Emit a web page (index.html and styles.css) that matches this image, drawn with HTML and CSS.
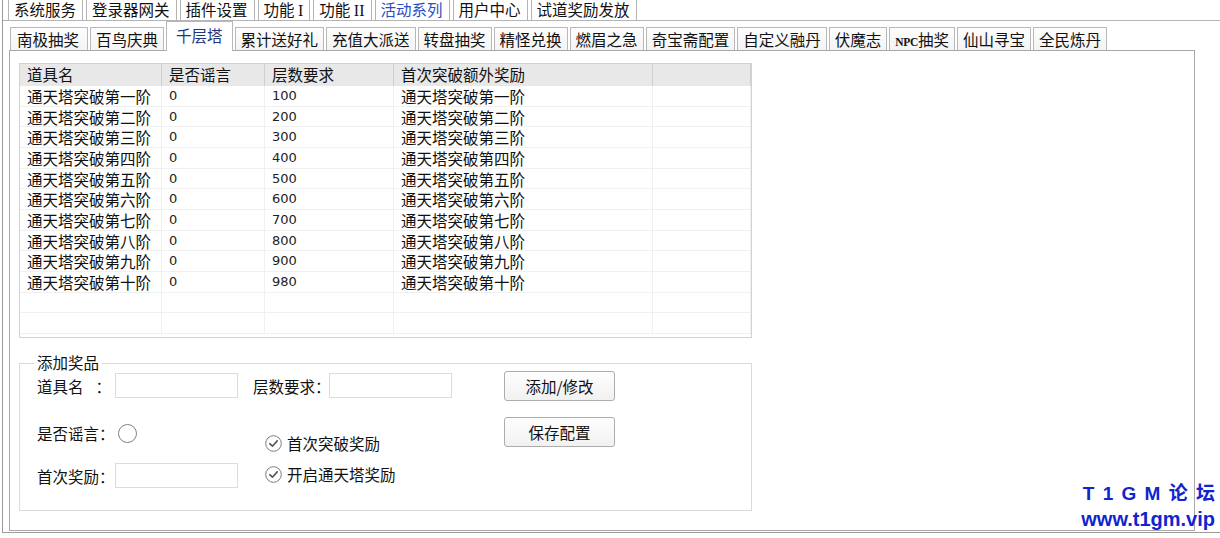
FILE: index.html
```html
<!DOCTYPE html>
<html lang="zh-CN">
<head>
<meta charset="utf-8">
<title>千层塔</title>
<link rel="stylesheet" href="styles.css">
</head>
<body>
<div class="window">
  <div class="toptabs">
    <div class="toptab">系统服务</div>
    <div class="toptab">登录器网关</div>
    <div class="toptab">插件设置</div>
    <div class="toptab">功能 <span class="roman">I</span></div>
    <div class="toptab">功能 <span class="roman">II</span></div>
    <div class="toptab active">活动系列</div>
    <div class="toptab">用户中心</div>
    <div class="toptab">试道奖励发放</div>
  </div>
  <div class="outer">
    <div class="subtabs">
      <div class="subtab first">南极抽奖</div>
      <div class="subtab">百鸟庆典</div>
      <div class="subtab active">千层塔</div>
      <div class="subtab">累计送好礼</div>
      <div class="subtab">充值大派送</div>
      <div class="subtab">转盘抽奖</div>
      <div class="subtab">精怪兑换</div>
      <div class="subtab">燃眉之急</div>
      <div class="subtab">奇宝斋配置</div>
      <div class="subtab">自定义融丹</div>
      <div class="subtab">伏魔志</div>
      <div class="subtab"><span class="npc">NPC</span>抽奖</div>
      <div class="subtab">仙山寻宝</div>
      <div class="subtab">全民炼丹</div>
    </div>
    <div class="pane">
      <div class="list">
        <div class="lrow head">
          <div class="cell">道具名</div>
          <div class="cell">是否谣言</div>
          <div class="cell">层数要求</div>
          <div class="cell">首次突破额外奖励</div>
          <div class="cell"></div>
        </div>
        <div class="lrow"><div class="cell">通天塔突破第一阶</div><div class="cell num">0</div><div class="cell num">100</div><div class="cell">通天塔突破第一阶</div><div class="cell"></div></div>
        <div class="lrow"><div class="cell">通天塔突破第二阶</div><div class="cell num">0</div><div class="cell num">200</div><div class="cell">通天塔突破第二阶</div><div class="cell"></div></div>
        <div class="lrow"><div class="cell">通天塔突破第三阶</div><div class="cell num">0</div><div class="cell num">300</div><div class="cell">通天塔突破第三阶</div><div class="cell"></div></div>
        <div class="lrow"><div class="cell">通天塔突破第四阶</div><div class="cell num">0</div><div class="cell num">400</div><div class="cell">通天塔突破第四阶</div><div class="cell"></div></div>
        <div class="lrow"><div class="cell">通天塔突破第五阶</div><div class="cell num">0</div><div class="cell num">500</div><div class="cell">通天塔突破第五阶</div><div class="cell"></div></div>
        <div class="lrow"><div class="cell">通天塔突破第六阶</div><div class="cell num">0</div><div class="cell num">600</div><div class="cell">通天塔突破第六阶</div><div class="cell"></div></div>
        <div class="lrow"><div class="cell">通天塔突破第七阶</div><div class="cell num">0</div><div class="cell num">700</div><div class="cell">通天塔突破第七阶</div><div class="cell"></div></div>
        <div class="lrow"><div class="cell">通天塔突破第八阶</div><div class="cell num">0</div><div class="cell num">800</div><div class="cell">通天塔突破第八阶</div><div class="cell"></div></div>
        <div class="lrow"><div class="cell">通天塔突破第九阶</div><div class="cell num">0</div><div class="cell num">900</div><div class="cell">通天塔突破第九阶</div><div class="cell"></div></div>
        <div class="lrow"><div class="cell">通天塔突破第十阶</div><div class="cell num">0</div><div class="cell num">980</div><div class="cell">通天塔突破第十阶</div><div class="cell"></div></div>
        <div class="lrow"><div class="cell"></div><div class="cell"></div><div class="cell"></div><div class="cell"></div><div class="cell"></div></div>
        <div class="lrow"><div class="cell"></div><div class="cell"></div><div class="cell"></div><div class="cell"></div><div class="cell"></div></div>
      </div>

      <div class="group">
        <span class="legend">添加奖品</span>
        <div class="col cola">
          <div class="field">
            <span class="label lname">道具名<span class="colon">：</span></span>
            <span class="input"></span>
          </div>
          <div class="field radiorow">
            <span class="label lrumor">是否谣言：</span>
            <span class="radio"></span>
          </div>
          <div class="field firstrow">
            <span class="label lname">首次奖励：</span>
            <span class="input"></span>
          </div>
        </div>
        <div class="col colb">
          <div class="field">
            <span class="label lfloor">层数要求：</span>
            <span class="input"></span>
          </div>
          <div class="checks">
            <div class="check">
              <svg class="cbox" width="17" height="17" viewBox="0 0 17 17"><circle cx="8.5" cy="8.5" r="7.8" fill="#fff" stroke="#7a7a7a" stroke-width="1"/><path d="M4.8 8.7 L7.4 11.2 L12.2 5.9" fill="none" stroke="#555" stroke-width="1.6" stroke-linecap="round" stroke-linejoin="round"/></svg>
              <span>首次突破奖励</span>
            </div>
            <div class="check">
              <svg class="cbox" width="17" height="17" viewBox="0 0 17 17"><circle cx="8.5" cy="8.5" r="7.8" fill="#fff" stroke="#7a7a7a" stroke-width="1"/><path d="M4.8 8.7 L7.4 11.2 L12.2 5.9" fill="none" stroke="#555" stroke-width="1.6" stroke-linecap="round" stroke-linejoin="round"/></svg>
              <span>开启通天塔奖励</span>
            </div>
          </div>
        </div>
        <div class="col colc">
          <button class="btn" type="button">添加/修改</button>
          <button class="btn" type="button">保存配置</button>
        </div>
      </div>
    </div>
  </div>
</div>
<div class="watermark">
  <div class="wm1">T 1 G M 论 坛</div>
  <div class="wm2">www.t1gm.vip</div>
</div>
</body>
</html>
```
FILE: styles.css
```css
* { box-sizing: border-box; }
html, body { margin: 0; padding: 0; }
body {
  width: 1220px;
  height: 538px;
  overflow: hidden;
  position: relative;
  background: #fff;
  color: #111;
  font-family: "Noto Sans CJK SC", "Liberation Sans", sans-serif;
  font-size: 15.5px;
}
.window {
  margin-left: 2px;
  height: 533px;
  border-left: 1px solid #9a9a9a;
  border-bottom: 1px solid #9a9a9a;
}
.toptabs {
  display: flex;
  gap: 3px;
  padding-left: 5px;
  height: 20px;
}
.toptab {
  height: 20px;
  line-height: 19px;
  padding: 0 6px 0 5px;
  border: 1px solid #b4b4b4;
  border-top: none;
  border-bottom: none;
  background: #fff;
  white-space: nowrap;
}
.toptab.active { color: #2a4cc4; }
.roman { font-family: "Liberation Serif", serif; font-size: 16px; }
.outer {
  border-top: 1px solid #b4b4b4;
}
.subtabs {
  display: flex;
  align-items: flex-end;
  gap: 2px;
  height: 29px;
  padding-left: 7px;
}
.subtab {
  height: 23px;
  line-height: 22px;
  padding: 0 5px;
  border: 1px solid #b8b8b8;
  border-bottom: none;
  background: linear-gradient(#fdfdfd, #f4f4f4);
  white-space: nowrap;
}
.subtab.first { padding: 0 8px 0 6px; }
.subtab.active {
  height: 30px;
  line-height: 26px;
  margin-bottom: -1px;
  padding: 0 9px;
  background: #fff;
  color: #1f3580;
  position: relative;
  z-index: 1;
}
.npc {
  font-family: "Liberation Serif", serif;
  font-weight: bold;
  font-size: 11.5px;
  letter-spacing: -0.3px;
}
.pane {
  margin-left: 6px;
  width: 1186px;
  height: 481px;
  border: 1px solid #a8a8a8;
  padding: 12px 0 0 9px;
}
.list {
  width: 733px;
  height: 275px;
  border: 1px solid #d2d2d2;
}
.lrow {
  display: grid;
  grid-template-columns: 142px 103px 129px 259px 98px;
  height: 20.67px;
  border-bottom: 1px solid #f0f0f0;
  line-height: 20px;
}
.lrow.head {
  height: 22px;
  line-height: 21px;
  background: #e8e8e8;
  border-bottom: none;
}
.cell {
  padding-left: 7px;
  border-right: 1px solid #f0f0f0;
  white-space: nowrap;
}
.head .cell { border-right: 1px solid #cfcfcf; }
.cell.num {
  font-family: "DejaVu Sans", sans-serif;
  font-size: 13px;
  color: #222;
}
.group {
  position: relative;
  margin-top: 25px;
  width: 733px;
  height: 148px;
  border: 1px solid #dadada;
  display: flex;
  padding: 9px 0 0 17px;
}
.legend {
  position: absolute;
  top: -12px;
  left: 14px;
  padding: 0 3px;
  background: #fff;
  line-height: 20px;
}
.col { display: flex; flex-direction: column; }
.cola { width: 201px; }
.colb { width: 199px; margin-left: 15px; }
.colc { margin-left: 52px; margin-top: -2px; gap: 16px; }
.field {
  display: flex;
  align-items: center;
  height: 25px;
}
.label { white-space: nowrap; }
.lname { width: 78px; }
.colon { margin-left: 12px; }
.lrumor { width: 81px; }
.lfloor { width: 76px; }
.input {
  width: 123px;
  height: 25px;
  border: 1px solid #dcdcdc;
  background: #fff;
}
.radiorow { margin-top: 25px; height: 20px; }
.firstrow { margin-top: 20px; }
.radio {
  width: 19px;
  height: 19px;
  border: 1px solid #808080;
  border-radius: 50%;
  background: #fff;
}
.checks {
  margin-top: 35px;
  padding-left: 12px;
  display: flex;
  flex-direction: column;
  gap: 11px;
}
.check {
  display: flex;
  align-items: center;
  gap: 5px;
  height: 20px;
  white-space: nowrap;
}
.cbox { flex: none; }
.btn {
  width: 111px;
  height: 30px;
  border: 1px solid #adadad;
  border-radius: 3px;
  background: linear-gradient(#fefefe, #f1f1f1);
  font-family: "Noto Sans CJK SC", "Liberation Sans", sans-serif;
  font-size: 15.5px;
  color: #111;
  padding: 0;
  line-height: 28px;
}
.watermark {
  position: absolute;
  right: 5px;
  top: 482px;
  text-align: right;
  color: #1024d0;
  font-family: "Liberation Sans", "Noto Sans CJK SC", sans-serif;
  font-weight: bold;
}
.wm1 { font-size: 19px; line-height: 24px; letter-spacing: 1.5px; margin-right: -1.5px; }
.wm2 { font-size: 20px; line-height: 26px; }
```
